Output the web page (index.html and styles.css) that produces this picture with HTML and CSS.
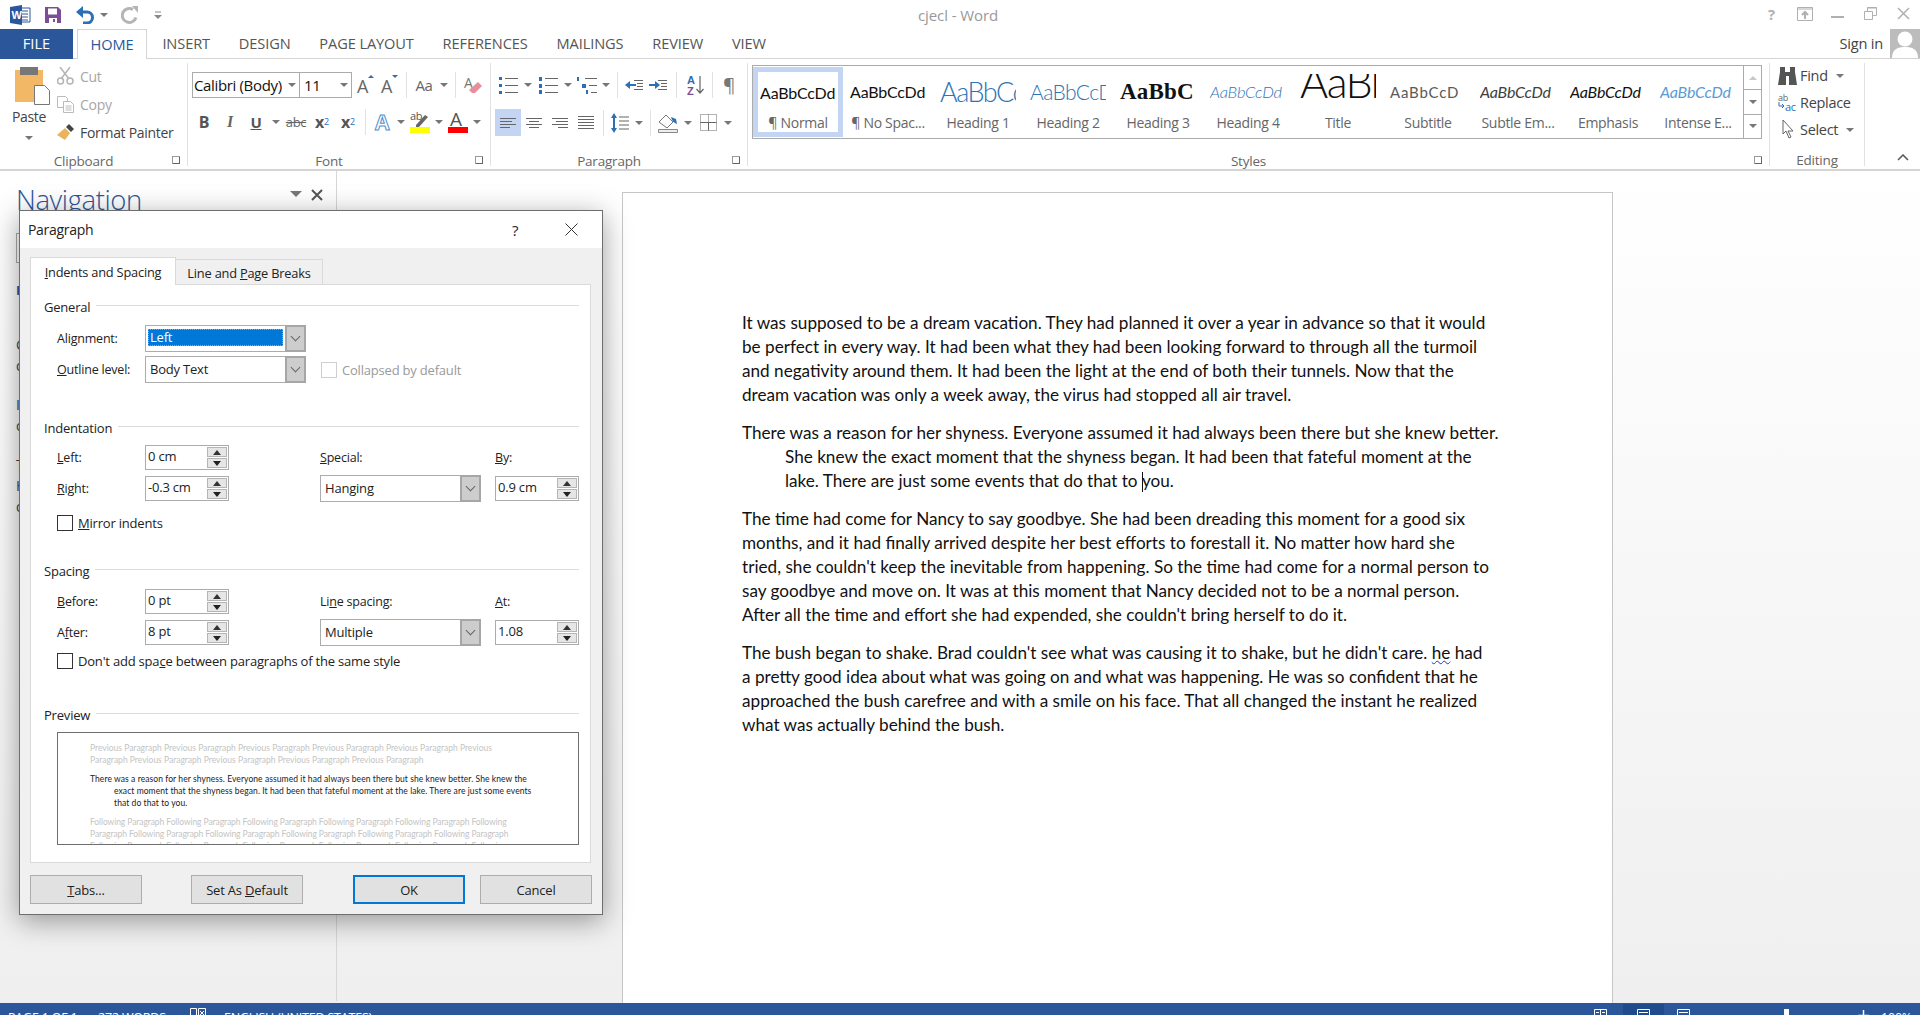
FILE: index.html
```html
<!DOCTYPE html>
<html lang="en">
<head>
    <meta charset="UTF-8">
    <title>cjecl - Word</title>
    <link rel="stylesheet" href="styles.css">
</head>
<body>
<div class="app">
    <!-- title bar -->
    <div class="titlebar">
        <div class="qat">
            <svg class="word-logo" width="21" height="20" viewBox="0 0 21 20"><path d="M7 3h13v14H7z" fill="#fff" stroke="#2b579a"/><path d="M10 6h8M10 9h8M10 12h8M10 15h8" stroke="#2b579a"/><path d="M0 2 12 0v20L0 18z" fill="#2b579a"/><text x="1.5" y="14" font-size="11" font-weight="700" fill="#fff" font-family="Liberation Sans">W</text></svg>
            <svg class="qat-save" width="16" height="16" viewBox="0 0 16 16"><path d="M0 0h13l3 3v13H0z" fill="#7d4e98"/><path d="M3 1.500h9v6H3z" fill="#fff"/><path d="M4 11h8v5H4z" fill="#fff"/><path d="M8 12h2v3H8z" fill="#7d4e98"/></svg>
            <svg class="qat-undo" width="19" height="18" viewBox="0 0 19 18"><path d="M2 6h9a5 5 0 0 1 0 11H7" fill="none" stroke="#2b6fb5" stroke-width="3"/><path d="M0 6l7-6v12z" fill="#2b6fb5"/></svg>
            <i class="caret qat-caret"></i>
            <svg class="qat-redo" width="18" height="18" viewBox="0 0 18 18"><path d="M12 3.500a7 7 0 1 0 3 8" fill="none" stroke="#b5b5b5" stroke-width="3"/><path d="M11 0h6v7z" fill="#b5b5b5"/></svg>
            <svg class="qat-more" width="8" height="8" viewBox="0 0 8 8"><path d="M1 1h6" stroke="#888"/><path d="M0 4h8L4 8z" fill="#888"/></svg>
        </div>
        <div class="doc-title">cjecl - Word</div>
        <div class="win-btns">
            <span class="win-btn win-help">?</span>
            <span class="win-btn"><svg width="16" height="14" viewBox="0 0 16 14"><path d="M.5.500h15v13H.5z" fill="none" stroke="#b0b0b0"/><path d="M1 2h14" stroke="#b0b0b0"/><path d="M8 12V5M5 8l3-3 3 3" fill="none" stroke="#b0b0b0" stroke-width="2"/></svg></span>
            <span class="win-btn"><svg width="13" height="14" viewBox="0 0 13 14"><path d="M0 10h13" stroke="#b0b0b0" stroke-width="2"/></svg></span>
            <span class="win-btn"><svg width="13" height="13" viewBox="0 0 13 13"><path d="M.5 4.500h8v8h-8zM3.500 4V.500h9v8H9" fill="none" stroke="#b0b0b0"/><path d="M3 1h10" stroke="#b0b0b0"/></svg></span>
            <span class="win-btn"><svg width="13" height="13" viewBox="0 0 13 13"><path d="M1 1l11 11M12 1L1 12" stroke="#b0b0b0" stroke-width="1.500"/></svg></span>
        </div>
    </div>

    <!-- ribbon tabs -->
    <div class="tabs">
        <span class="tab-file">FILE</span>
        <span class="tab tab-home">HOME</span>
        <span class="tab">INSERT</span>
        <span class="tab">DESIGN</span>
        <span class="tab">PAGE LAYOUT</span>
        <span class="tab">REFERENCES</span>
        <span class="tab">MAILINGS</span>
        <span class="tab">REVIEW</span>
        <span class="tab">VIEW</span>
        <span class="sign-in">Sign in</span>
        <span class="avatar"><svg width="30" height="29" viewBox="0 0 30 29"><circle cx="15" cy="10" r="7.500" fill="#fff"/><path d="M2 29c0-9 6-11 13-11s13 2 13 11z" fill="#fff"/></svg></span>
    </div>

    <!-- ribbon -->
    <div class="ribbon">
        <div class="group group-clipboard">
            <div class="group-body clip-body">
                <div class="paste">
                    <svg width="36" height="38" viewBox="0 0 36 38"><path d="M0 3h28v32H0z" fill="#f2b866"/><path d="M5 0h18v8H5z" fill="#777"/><path d="M19.500 18.500h10l5 5v14h-15z" fill="#fff" stroke="#777"/></svg>
                    <span class="paste-label">Paste</span>
                    <i class="caret"></i>
                </div>
                <div class="clip-tools">
                    <div class="clip-row muted">
                        <svg width="17" height="18" viewBox="0 0 17 18"><circle cx="3.500" cy="14" r="3" fill="none" stroke="#b5b5b5" stroke-width="1.500"/><circle cx="13" cy="14" r="3" fill="none" stroke="#b5b5b5" stroke-width="1.500"/><path d="M3 0l9 12M13 0L4 12" stroke="#b5b5b5" stroke-width="1.500"/></svg>
                        <span>Cut</span>
                    </div>
                    <div class="clip-row muted">
                        <svg width="17" height="17" viewBox="0 0 17 17"><path d="M.5.500h8l2 2v9H.5z" fill="#fff" stroke="#bbb"/><path d="M6.500 5.500h7l3 3v8h-10z" fill="#fff" stroke="#bbb"/><path d="M8.500 10h6M8.500 12h6M8.500 14h6" stroke="#bbb"/></svg>
                        <span>Copy</span>
                    </div>
                    <div class="clip-row">
                        <svg width="17" height="16" viewBox="0 0 17 16"><path d="M0 11l8-7 5 5-5 7z" fill="#eab35d"/><path d="M9 3l3-3 5 5-3 3z" fill="#444"/></svg>
                        <span>Format Painter</span>
                    </div>
                </div>
            </div>
            <div class="group-label">Clipboard<i class="launcher"></i></div>
        </div>

        <div class="group group-font">
            <div class="group-body">
                <div class="tool-row font-row1">
                    <div class="font-box">
                        <span class="font-name">Calibri (Body)</span><i class="caret"></i>
                        <span class="font-size">11</span><i class="caret"></i>
                    </div>
                    <span class="t t-n"><svg width="20" height="20" viewBox="0 0 20 20"><text x="1" y="18" font-size="18" fill="#666" font-family="Open Sans">A</text><path d="M12 3h6l-3-3z" fill="#2b6fb5"/></svg></span>
                    <span class="t t-n"><svg width="20" height="20" viewBox="0 0 20 20"><text x="1" y="18" font-size="18" fill="#666" font-family="Open Sans">A</text><path d="M12 0h6l-3 3z" fill="#2b6fb5"/></svg></span>
                    <i class="sep"></i>
                    <span class="t aa">Aa</span><i class="caret"></i>
                    <i class="sep"></i>
                    <span class="t"><svg width="20" height="20" viewBox="0 0 20 20"><text x="1" y="13" font-size="14" fill="#777" font-family="Open Sans">A</text><path d="M6 15l9-8 4 4-7 7H9z" fill="#e98d96"/></svg></span>
                </div>
                <div class="tool-row font-row2">
                    <span class="t fmt-b">B</span>
                    <span class="t fmt-i">I</span>
                    <span class="t fmt-u">U</span><i class="caret"></i>
                    <span class="t fmt-s">abc</span>
                    <span class="t fmt-x">x<sub>2</sub></span>
                    <span class="t fmt-x">x<sup>2</sup></span>
                    <i class="sep"></i>
                    <span class="t t-n fmt-a">A</span><i class="caret"></i>
                    <span class="t t-n"><svg width="20" height="22" viewBox="0 0 20 22"><text x="0" y="9" font-size="11" fill="#555" font-family="Open Sans">ab</text><path d="M6 14l9-10 3 2-9 10H6z" fill="#666"/><path d="M0 16h20v6H0z" fill="#ff0"/></svg></span><i class="caret"></i>
                    <span class="t t-n"><svg width="20" height="22" viewBox="0 0 20 22"><text x="2" y="15" font-size="19" fill="#555" font-family="Open Sans">A</text><path d="M0 16h20v6H0z" fill="#f00"/></svg></span><i class="caret"></i>
                </div>
            </div>
            <div class="group-label">Font<i class="launcher"></i></div>
        </div>

        <div class="group group-para">
            <div class="group-body">
                <div class="tool-row para-row1">
                    <span class="t"><svg width="20" height="17" viewBox="0 0 20 17"><path d="M7 1.500h13M7 8.500h13M7 15.500h13" stroke="#666" stroke-width="1.200"/><path d="M1 0h3v3H1zM1 7h3v3H1zM1 14h3v3H1z" fill="#2b6fb5"/></svg></span><i class="caret"></i>
                    <span class="t"><svg width="20" height="17" viewBox="0 0 20 17"><path d="M7 1.500h13M7 8.500h13M7 15.500h13" stroke="#666" stroke-width="1.200"/><path d="M1 0h3v4H1zM1 7h3v4H1zM1 13h3v4H1z" fill="#2b6fb5"/></svg></span><i class="caret"></i>
                    <span class="t t-n"><svg width="20" height="17" viewBox="0 0 20 17"><path d="M8 1.500h12M12 8.500h8M14 15.500h6" stroke="#666" stroke-width="1.200"/><path d="M0 0h2v4H0zM5 7h4v4H5zM9 13h2v4H9z" fill="#2b6fb5"/></svg></span><i class="caret"></i>
                    <i class="sep"></i>
                    <span class="t t-n"><svg width="18" height="10" viewBox="0 0 18 10"><path d="M9 .500h9M12 3.500h6M12 6.500h6M9 9.500h9" stroke="#666"/><path d="M0 5l5-4v3h6v2H5v3z" fill="#2b6fb5"/></svg></span>
                    <span class="t t-n"><svg width="18" height="10" viewBox="0 0 18 10"><path d="M9 .500h9M12 3.500h6M12 6.500h6M9 9.500h9" stroke="#666"/><path d="M11 5L6 1v3H0v2h6v3z" fill="#2b6fb5"/></svg></span>
                    <i class="sep sep-wide"></i>
                    <span class="t"><svg width="17" height="20" viewBox="0 0 17 20"><text x="0" y="9" font-size="11" font-weight="700" fill="#2b6fb5" font-family="Liberation Sans">A</text><text x="0" y="20" font-size="11" font-weight="700" fill="#7d4e98" font-family="Liberation Sans">Z</text><path d="M13 1v17M9.500 14l3.500 4 3.500-4" fill="none" stroke="#666" stroke-width="1.200"/></svg></span>
                    <i class="sep"></i>
                    <span class="t t-n pilcrow">¶</span>
                </div>
                <div class="tool-row para-row2">
                    <span class="t t-on"><svg width="16" height="10" viewBox="0 0 16 10"><path d="M0 .500h16M0 3.500h12M0 6.500h16M0 9.500h10" stroke="#666"/></svg></span>
                    <span class="t"><svg width="16" height="10" viewBox="0 0 16 10"><path d="M0 .500h16M3 3.500h10M0 6.500h16M3 9.500h10" stroke="#666"/></svg></span>
                    <span class="t"><svg width="16" height="10" viewBox="0 0 16 10"><path d="M0 .500h16M4 3.500h12M0 6.500h16M6 9.500h10" stroke="#666"/></svg></span>
                    <span class="t"><svg width="16" height="13" viewBox="0 0 16 13"><path d="M0 .500h16M0 3.500h16M0 6.500h16M0 9.500h16M0 12.500h16" stroke="#666"/></svg></span>
                    <i class="sep"></i>
                    <span class="t t-n"><svg width="18" height="20" viewBox="0 0 18 20"><path d="M8 4h10M8 8h10M8 12h10M8 16h10" stroke="#666" stroke-width="1.200"/><path d="M3 3v14" stroke="#2b6fb5" stroke-width="2"/><path d="M0 5l3-5 3 5zM0 15l3 5 3-5z" fill="#2b6fb5"/></svg></span><i class="caret"></i>
                    <i class="sep"></i>
                    <span class="t"><svg width="20" height="20" viewBox="0 0 20 20"><path d="M1 9l7-7 7 7-6 6z" fill="#fff" stroke="#777"/><path d="M13 4l5 2 1 5c-3-1-5-3-6-7z" fill="#2b6fb5"/><path d="M.5 16.500h19v3H.5z" fill="#eee" stroke="#888"/></svg></span><i class="caret"></i>
                    <span class="t"><svg width="17" height="17" viewBox="0 0 17 17"><path d="M.5.500h16v16H.5zM.5 8.500h16M8.500.500v16" fill="none" stroke="#666" stroke-dasharray="1 1"/><path d="M.5 8.500h16M8.500 8.500v8" stroke="#666" fill="none"/></svg></span><i class="caret"></i>
                </div>
            </div>
            <div class="group-label">Paragraph<i class="launcher"></i></div>
        </div>

        <div class="group group-styles">
            <div class="group-body">
                <div class="gallery">
                    <div class="style-item style-on"><span class="sample s-normal">AaBbCcDd</span><span class="style-name">¶ Normal</span></div>
                    <div class="style-item"><span class="sample s-normal">AaBbCcDd</span><span class="style-name">¶ No Spac...</span></div>
                    <div class="style-item"><span class="sample s-h1">AaBbCc</span><span class="style-name">Heading 1</span></div>
                    <div class="style-item"><span class="sample s-h2">AaBbCcD</span><span class="style-name">Heading 2</span></div>
                    <div class="style-item"><span class="sample s-h3">AaBbC</span><span class="style-name">Heading 3</span></div>
                    <div class="style-item"><span class="sample s-h4">AaBbCcDd</span><span class="style-name">Heading 4</span></div>
                    <div class="style-item"><span class="sample s-title">AaBbC</span><span class="style-name">Title</span></div>
                    <div class="style-item"><span class="sample s-subtitle">AaBbCcD</span><span class="style-name">Subtitle</span></div>
                    <div class="style-item"><span class="sample s-subtle">AaBbCcDd</span><span class="style-name">Subtle Em...</span></div>
                    <div class="style-item"><span class="sample s-em">AaBbCcDd</span><span class="style-name">Emphasis</span></div>
                    <div class="style-item"><span class="sample s-intense">AaBbCcDd</span><span class="style-name">Intense E...</span></div>
                    <div class="gallery-scroll">
                        <span><i class="tri-up"></i></span>
                        <span><i class="caret"></i></span>
                        <span class="gallery-more"><i class="caret"></i></span>
                    </div>
                </div>
            </div>
            <div class="group-label">Styles<i class="launcher"></i></div>
        </div>

        <div class="group group-edit">
            <div class="group-body edit-body">
                <div class="edit-row">
                    <svg width="19" height="19" viewBox="0 0 19 19"><path d="M2 1h5v5h5V1h5v5l2 13h-8V10H8v9H0L2 6z" fill="#555"/></svg>
                    <span>Find</span><i class="caret"></i>
                </div>
                <div class="edit-row">
                    <svg width="19" height="19" viewBox="0 0 19 19"><text x="0" y="8" font-size="9" fill="#666" font-family="Open Sans">ab</text><text x="7" y="18" font-size="11" fill="#2b6fb5" font-family="Open Sans">ac</text><path d="M1 9v4h5M4 11l2 2-2 2" fill="none" stroke="#2b6fb5"/></svg>
                    <span>Replace</span>
                </div>
                <div class="edit-row">
                    <svg width="19" height="19" viewBox="0 0 19 19"><path d="M5 0v14l3-3 3 7 2-1-3-6h5z" fill="#fff" stroke="#666"/></svg>
                    <span>Select</span><i class="caret"></i>
                </div>
            </div>
            <div class="group-label label-plain">Editing</div>
        </div>
        <div class="collapse"><svg width="12" height="7" viewBox="0 0 12 7"><path d="M1 6l5-5 5 5" fill="none" stroke="#555" stroke-width="1.500"/></svg></div>
    </div>

    <!-- navigation pane and document -->
    <div class="workspace">
        <div class="nav">
            <div class="nav-head">
                <span class="nav-title">Navigation</span>
                <i class="nav-drop"></i>
                <svg width="12" height="12" viewBox="0 0 12 12"><path d="M1 1l10 10M11 1L1 11" stroke="#555" stroke-width="2"/></svg>
            </div>
            <div class="nav-search"></div>
            <div class="nav-tab">HEADINGS</div>
            <p class="nav-text">Create an interactive outline of your<br>document.</p>
            <p class="nav-text">It's a great way to keep track of where you are<br>or quickly move your content around.</p>
            <p class="nav-text">To get started, go to the Home tab and apply<br>Heading styles to the headings in your<br>document.</p>
        </div>
        <div class="doc">
            <div class="page">
                <p>It was supposed to be a dream vacation. They had planned it over a year in advance so that it would<br>be perfect in every way. It had been what they had been looking forward to through all the turmoil<br>and negativity around them. It had been the light at the end of both their tunnels. Now that the<br>dream vacation was only a week away, the virus had stopped all air travel.</p>
                <p class="hanging">There was a reason for her shyness. Everyone assumed it had always been there but she knew better.<br>She knew the exact moment that the shyness began. It had been that fateful moment at the<br>lake. There are just some events that do that to <span class="cursor"></span>you.</p>
                <p>The time had come for Nancy to say goodbye. She had been dreading this moment for a good six<br>months, and it had finally arrived despite her best efforts to forestall it. No matter how hard she<br>tried, she couldn't keep the inevitable from happening. So the time had come for a normal person to<br>say goodbye and move on. It was at this moment that Nancy decided not to be a normal person.<br>After all the time and effort she had expended, she couldn't bring herself to do it.</p>
                <p>The bush began to shake. Brad couldn't see what was causing it to shake, but he didn't care. <span class="squiggle">he</span> had<br>a pretty good idea about what was going on and what was happening. He was so confident that he<br>approached the bush carefree and with a smile on his face. That all changed the instant he realized<br>what was actually behind the bush.</p>
            </div>
        </div>
    </div>

    <!-- status bar, cut by the window edge -->
    <div class="status">
        <span class="st-page">PAGE 1 OF 1</span>
        <span class="st-words">272 WORDS</span>
        <svg class="st-proof" width="16" height="16" viewBox="0 0 16 16"><path d="M.5.500h6v14h-6zM8.500.500h7v14h-7z" fill="none" stroke="#fff"/><path d="M10 3l4 4M14 3l-4 4" stroke="#fff"/></svg>
        <span class="st-lang">ENGLISH (UNITED STATES)</span>
        <div class="st-right">
            <svg class="st-read" width="13" height="12" viewBox="0 0 13 12"><path d="M.5.500h12v11H.5zM6.500.500v11M2 3.500h3M8 3.500h3M2 6.500h3M8 6.500h3" fill="none" stroke="#fff"/></svg>
            <span class="st-active"><svg width="13" height="12" viewBox="0 0 13 12"><path d="M.5.500h12v11H.5zM2 3.500h9M2 6.500h9M2 9.500h9" fill="none" stroke="#fff"/></svg></span>
            <svg class="st-web" width="13" height="12" viewBox="0 0 13 12"><path d="M.5.500h12v11H.5zM2 3.500h9M2 6.500h6" fill="none" stroke="#fff"/></svg>
            <i class="st-thumb"></i>
            <svg class="st-plus" width="11" height="11" viewBox="0 0 11 11"><path d="M5.500 0v11M0 5.500h11" stroke="#fff" stroke-width="1.500"/></svg>
            <span class="st-zoom">100%</span>
        </div>
    </div>

    <!-- paragraph dialog over the window -->
    <div class="dialog">
        <div class="dlg-title">
            <span class="dlg-name">Paragraph</span>
            <span class="dlg-help">?</span>
            <svg width="13" height="13" viewBox="0 0 13 13"><path d="M.5.500l12 12M12.500.500l-12 12" stroke="#333"/></svg>
        </div>
        <div class="dlg-body">
            <div class="dlg-tabs">
                <span class="dlg-tab dlg-tab-on"><u>I</u>ndents and Spacing</span>
                <span class="dlg-tab">Line and <u>P</u>age Breaks</span>
            </div>
            <div class="panel">
                <div class="legend legend-first">General</div>
                <div class="row row-general row-align">
                    <label>Ali<u>g</u>nment:</label>
                    <div class="combo"><span class="combo-text"><span class="combo-sel">Left</span></span><span class="combo-btn"><i class="chev"></i></span></div>
                </div>
                <div class="row row-general row-outline">
                    <label><u>O</u>utline level:</label>
                    <div class="combo"><span class="combo-text">Body Text</span><span class="combo-btn"><i class="chev"></i></span></div>
                    <i></i>
                    <div class="check check-off"><i class="box"></i><span>Collapsed by default</span></div>
                </div>

                <div class="legend legend-indent">Indentation</div>
                <div class="row row-form row-first">
                    <label><u>L</u>eft:</label>
                    <div class="spin"><span class="spin-text">0 cm</span><span class="spin-btns"><b><i class="tri-up"></i></b><b><i class="caret"></i></b></span></div>
                    <i></i>
                    <label class="col-special"><u>S</u>pecial:</label>
                    <i></i>
                    <label><u>B</u>y:</label>
                </div>
                <div class="row row-form row-second">
                    <label><u>R</u>ight:</label>
                    <div class="spin"><span class="spin-text">-0.3 cm</span><span class="spin-btns"><b><i class="tri-up"></i></b><b><i class="caret"></i></b></span></div>
                    <i></i>
                    <div class="combo"><span class="combo-text">Hanging</span><span class="combo-btn"><i class="chev"></i></span></div>
                    <i></i>
                    <div class="spin"><span class="spin-text">0.9 cm</span><span class="spin-btns"><b><i class="tri-up"></i></b><b><i class="caret"></i></b></span></div>
                </div>
                <div class="check check-mirror"><i class="box"></i><span><u>M</u>irror indents</span></div>

                <div class="legend legend-spacing">Spacing</div>
                <div class="row row-form row-first">
                    <label><u>B</u>efore:</label>
                    <div class="spin"><span class="spin-text">0 pt</span><span class="spin-btns"><b><i class="tri-up"></i></b><b><i class="caret"></i></b></span></div>
                    <i></i>
                    <label class="col-special">Li<u>n</u>e spacing:</label>
                    <i></i>
                    <label><u>A</u>t:</label>
                </div>
                <div class="row row-form row-second">
                    <label>A<u>f</u>ter:</label>
                    <div class="spin"><span class="spin-text">8 pt</span><span class="spin-btns"><b><i class="tri-up"></i></b><b><i class="caret"></i></b></span></div>
                    <i></i>
                    <div class="combo"><span class="combo-text">Multiple</span><span class="combo-btn"><i class="chev"></i></span></div>
                    <i></i>
                    <div class="spin"><span class="spin-text">1.08</span><span class="spin-btns"><b><i class="tri-up"></i></b><b><i class="caret"></i></b></span></div>
                </div>
                <div class="check check-space"><i class="box"></i><span>Don't add spa<u>c</u>e between paragraphs of the same style</span></div>

                <div class="legend legend-preview">Preview</div>
                <div class="preview">
                    <p class="pv-grey">Previous Paragraph Previous Paragraph Previous Paragraph Previous Paragraph Previous Paragraph Previous<br>Paragraph Previous Paragraph Previous Paragraph Previous Paragraph Previous Paragraph</p>
                    <p class="pv-main">There was a reason for her shyness. Everyone assumed it had always been there but she knew better. She knew the<br><span class="pv-in">exact moment that the shyness began. It had been that fateful moment at the lake. There are just some events</span><br><span class="pv-in">that do that to you.</span></p>
                    <p class="pv-grey pv-after">Following Paragraph Following Paragraph Following Paragraph Following Paragraph Following Paragraph Following<br>Paragraph Following Paragraph Following Paragraph Following Paragraph Following Paragraph Following Paragraph<br>Following Paragraph Following Paragraph Following Paragraph Following Paragraph Following Paragraph Following</p>
                </div>
            </div>
            <div class="dlg-btns">
                <span class="btn"><u>T</u>abs...</span>
                <span class="btn btn-default">Set As <u>D</u>efault</span>
                <span class="btn btn-ok">OK</span>
                <span class="btn btn-cancel">Cancel</span>
            </div>
        </div>
    </div>
</div>
</body>
</html>
```

FILE: styles.css
```css
body,p{ margin: 0;}
body{
    font-family: "Open Sans", "Liberation Sans", sans-serif;
    color: #444;
    overflow: hidden;
}
i{ display: block; font-style: normal;}
.app{
    position: relative;
    display: flex;
    flex-direction: column;
    height: 1015px;
    overflow: hidden;
}

/* title bar */
.titlebar{
    display: grid;
    grid-template-columns: 1fr auto 1fr;
    height: 29px;
    flex-shrink: 0;
}
.qat{
    display: flex;
    align-items: center;
    padding: 0 0 0 10px;
}
.qat-save{ margin-left: 14px;}
.qat-undo{ margin-left: 15px;}
.qat-caret{ margin-left: 5px;}
.qat-redo{ margin-left: 13px;}
.qat-more{ margin-left: 15px;}
.doc-title{
    margin-right: 4px;
    font-size: 15px;
    line-height: 30px;
    color: #999;
    letter-spacing: -.1px;
}
.win-btns{
    display: flex;
    justify-content: flex-end;
}
.win-btn{
    display: flex;
    align-items: center;
    justify-content: center;
    width: 33px;
    height: 27px;
}
.win-help{
    font-size: 15px;
    font-weight: 700;
    color: #b0b0b0;
}

/* tabs */
.tabs{
    display: flex;
    align-items: stretch;
    height: 30px;
    flex-shrink: 0;
    border-bottom: 1px solid #d4d4d4;
    box-sizing: border-box;
    font-size: 14.600px;
    line-height: 29px;
}
.tab-file{
    width: 73px;
    margin-right: 4px;
    text-align: center;
    color: #fff;
    background-color: #2b579a;
    height: 30px;
}
.tab{
    padding: 0 14.400px;
    color: #555;
    letter-spacing: -.1px;
}
.tab-home{
    width: 70px;
    box-sizing: border-box;
    height: 30px;
    margin-right: 1px;
    padding: 0;
    text-align: center;
    color: #2b579a;
    background-color: #fff;
    border: 1px solid #d4d4d4;
    border-bottom: 0;
}
.sign-in{
    margin-left: auto;
    margin-right: 7px;
    letter-spacing: -.2px;
}
.avatar{
    width: 30px;
    height: 29px;
    background-color: #bcbcbc;
}
.avatar svg{ display: block;}

/* ribbon */
.ribbon{
    display: flex;
    height: 112px;
    flex-shrink: 0;
    padding-top: 4px;
    box-sizing: border-box;
    border-bottom: 2px solid #d4d4d4;
    font-size: 14px;
    letter-spacing: -.3px;
}
.group{
    display: flex;
    flex-direction: column;
    height: 103px;
    border-right: 1px solid #e1e1e1;
}
.group-clipboard{ width: 187px;}
.group-font{ width: 302px;}
.group-para{ width: 256px;}
.group-styles{ width: 1021px;}
.group-edit{ width: 94px;}
.group-body{ height: 87px; flex-shrink: 0;}
.group-label{
    position: relative;
    padding-right: 20px;
    margin-top: 3px;
    font-size: 13.500px;
    line-height: 16px;
    text-align: center;
    color: #666;
    letter-spacing: -.2px;
}
.group-label.label-plain{ padding-right: 0;}
.launcher{
    position: absolute;
    right: 7px;
    top: 3px;
    width: 7px;
    height: 7px;
    border: 1px solid #999;
    border-width: 1px 0 0 1px;
    box-shadow: inset -2px -2px 0 -1px #666;
}
.caret{
    flex-shrink: 0;
    width: 0;
    height: 0;
    border: 4px solid transparent;
    border-top-color: #777;
    border-bottom: 0;
}
.tri-up{
    width: 0;
    height: 0;
    border: 4px solid transparent;
    border-bottom-color: #333;
    border-top: 0;
}

/* clipboard */
.clip-body{ display: flex;}
.paste{
    display: flex;
    flex-direction: column;
    align-items: center;
    width: 46px;
    margin: 4px 0 0 6px;
    height: 80px;
}
.paste svg{ margin-left: 8px;}
.paste-label{ margin-top: 2px; line-height: 20px;}
.paste .caret{ margin-top: 9px;}
.clip-tools{ margin: -1px 0 0 5px;}
.clip-row{
    display: flex;
    align-items: center;
    gap: 6px;
    height: 28px;
    color: #444;
    white-space: nowrap;
}
.clip-row.muted{ color: #a6a6a6;}

/* tool rows */
.tool-row{
    display: flex;
    align-items: center;
}
.tool-row .caret{ margin: 0 3px;}
.t{
    display: flex;
    align-items: center;
    justify-content: center;
    flex-shrink: 0;
    width: 26px;
    height: 27px;
}
.t-n{ width: 24px;}
.t-on{ background-color: #c3d5f2;}
.sep{
    flex-shrink: 0;
    width: 1px;
    height: 26px;
    margin: 0 4px;
    background-color: #e1e1e1;
}
.sep-wide{ margin: 0 5px 0 6px;}
.font-row1{ height: 26px; margin-top: 9px; padding-left: 4px;}
.font-row2{ height: 27px; margin-top: 10px; padding-left: 3px;}
.font-box{
    display: flex;
    align-items: center;
    width: 160px;
    height: 26px;
    box-sizing: border-box;
    border: 1px solid #ababab;
    color: #111;
    font-size: 15px;
    letter-spacing: -.35px;
    white-space: nowrap;
    margin-right: 2px;
}
.font-name{
    width: 92px;
    padding-left: 1px;
    box-sizing: border-box;
    overflow: hidden;
}
.font-size{
    width: 38px;
    box-sizing: border-box;
    padding-left: 4px;
    border-left: 1px solid #ababab;
    line-height: 24px;
}
.aa{ color: #666; font-size: 15px;}
.fmt-b{ font-weight: 700; font-size: 16px; color: #555;}
.fmt-i{ font-style: italic; font-weight: 700; font-size: 16px; color: #666; font-family: "Liberation Serif", serif;}
.fmt-u{ text-decoration: underline; font-weight: 700; font-size: 15px; color: #555;}
.fmt-s{ text-decoration: line-through; font-size: 13px; color: #666;}
.fmt-x{ font-weight: 700; font-size: 16px; color: #555;}
.fmt-x sub, .fmt-x sup{ font-size: 9px; font-weight: 400; color: #2b6fb5; line-height: 0;}
.fmt-a{
    font-size: 21px;
    font-weight: 700;
    color: #fff;
    -webkit-text-stroke: 1px #4f8fd0;
}
.para-row1{ height: 26px; margin-top: 9px; padding-left: 4px;}
.para-row2{ height: 27px; margin-top: 11px; padding-left: 4px;}
.pilcrow{ font-size: 19px; color: #777;}

/* styles gallery */
.gallery{
    display: flex;
    height: 74px;
    margin: 2px 0 0 4px;
    width: 1010px;
    box-sizing: border-box;
    border: 1px solid #ababab;
    padding-top: 1px;
}
.style-item{
    display: flex;
    flex-direction: column;
    align-items: center;
    width: 90px;
    height: 70px;
    padding-top: 2px;
    box-sizing: border-box;
}
.style-on{
    padding-top: 0;
    border: 5px solid #c3d5f2;
}
.sample{
    display: block;
    width: 76px;
    height: 46px;
    flex-shrink: 0;
    line-height: 46px;
    overflow: hidden;
    white-space: nowrap;
    font-family: Lato, "Liberation Sans", sans-serif;
    font-size: 16px;
    letter-spacing: -.2px;
    color: #111;
}
.style-on .sample{ height: 43px; line-height: 41px;}
.style-name{
    font-size: 14px;
    line-height: 16px;
    color: #666;
    white-space: nowrap;
}
.s-h1{ font-size: 27px; font-weight: 300; color: #2e74b5; letter-spacing: -1.500px;}
.s-h2{ font-size: 21px; font-weight: 300; color: #2e74b5; letter-spacing: -.6px;}
.s-h3{ font-family: "Liberation Serif", serif; font-size: 23px; font-weight: 700; color: #111; letter-spacing: .2px;}
.s-h4{ font-size: 16.500px; font-style: italic; font-weight: 300; color: #2e74b5;}
.s-title{
    height: 41px;
    margin-top: 5px;
    font-size: 43px;
    line-height: 16px;
    font-weight: 300;
    color: #111;
    letter-spacing: -1.500px;
}
.s-subtitle{ color: #5a5a5a; letter-spacing: .8px; font-size: 15px;}
.s-subtle{ font-style: italic; color: #404040;}
.s-em{ font-style: italic; color: #111;}
.s-intense{ font-style: italic; color: #5b9bd5;}
.gallery-scroll{
    display: flex;
    flex-direction: column;
    width: 17px;
    margin: -1px 0 0 auto;
    border-left: 1px solid #ababab;
}
.gallery-scroll span{
    display: flex;
    align-items: center;
    justify-content: center;
    flex: 1;
    border-bottom: 1px solid #ababab;
}
.gallery-scroll span:last-child{ border-bottom: 0;}
.gallery-scroll .tri-up{ border-bottom-color: #c8c8c8;}
.edit-body{ margin-top: -1px;}
.edit-row{
    display: flex;
    align-items: center;
    gap: 3px;
    height: 27px;
    padding-left: 8px;
    font-size: 14.500px;
}
.edit-row .caret{ margin-left: 5px;}
.collapse{
    align-self: flex-end;
    margin: 0 0 4px 32px;
}

/* workspace */
.workspace{
    display: flex;
    flex: 1;
    min-height: 0;
    background: linear-gradient(#fff, #efefef);
}
.nav{
    width: 337px;
    box-sizing: border-box;
    height: 830px;
    padding: 0 0 0 16px;
    border-right: 1px solid #d6d6d6;
    color: #444;
    white-space: nowrap;
}
.nav-head{
    display: flex;
    height: 62px;
    align-items: flex-start;
}
.nav-title{
    width: 274px;
    font-size: 27.500px;
    font-weight: 300;
    line-height: 58px;
    letter-spacing: -.4px;
    color: #2b579a;
}
.nav-drop{
    width: 0;
    height: 0;
    margin-top: 20px;
    border: 6px solid transparent;
    border-top-color: #777;
    border-bottom: 0;
}
.nav-head svg{ margin: 18px 0 0 9px;}
.nav-search{
    width: 300px;
    height: 30px;
    box-sizing: border-box;
    border: 1px solid #ababab;
    background-color: #fff;
}
.nav-tab{
    margin-top: 19px;
    font-size: 13px;
    font-weight: 700;
    line-height: 16px;
    color: #2b579a;
}
.nav-text{
    font-size: 14px;
    line-height: 21px;
    margin-top: 18px;
}
.nav-tab + .nav-text{ margin-top: 36px;}
.doc{ flex: 1;}
.page{
    width: 991px;
    height: 900px;
    margin: 21px 0 0 285px;
    padding: 118px 0 0 119px;
    box-sizing: border-box;
    border: 1px solid #c6c6c6;
    background-color: #fff;
    font-family: Lato, "Liberation Sans", sans-serif;
    font-size: 17.150px;
    line-height: 24px;
    color: #111;
    white-space: nowrap;
}
.page p{ margin-bottom: 14px;}
.page .hanging{
    padding-left: 43px;
    text-indent: -43px;
}
.cursor{
    display: inline-block;
    width: 1px;
    height: 20px;
    margin-right: -1px;
    vertical-align: -5px;
    background-color: #111;
}
.squiggle{ text-decoration: underline wavy #2b2bd0 1px;}

/* status bar */
.status{
    display: flex;
    height: 12px;
    flex-shrink: 0;
    overflow: hidden;
    background-color: #2b579a;
    color: #fff;
    font-size: 12.500px;
    line-height: 18px;
    letter-spacing: -.2px;
    white-space: nowrap;
}
.st-page{ margin: 6px 0 0 8px; width: 90px;}
.st-words{ margin-top: 6px; width: 92px;}
.st-proof{ margin-top: 5px;}
.st-lang{ margin: 6px 0 0 18px;}
.st-right{
    position: relative;
    display: flex;
    align-items: flex-start;
    margin-left: auto;
    width: 326px;
}
.st-read{ margin-top: 6px;}
.st-active{
    width: 41px;
    height: 12px;
    margin: 1px 0 0 16px;
    background-color: #1f4a8c;
    text-align: center;
}
.st-active svg{ margin-top: 5px;}
.st-web{ margin: 6px 0 0 13px;}
.st-thumb{
    width: 5px;
    height: 8px;
    margin: 6px 0 0 94px;
    background-color: #fff;
}
.st-plus{ margin: 7px 0 0 69px;}
.st-zoom{ margin: 6px 0 0 12px;}

/* dialog */
.dialog{
    position: absolute;
    left: 19px;
    top: 210px;
    width: 584px;
    height: 705px;
    box-sizing: border-box;
    border: 1px solid #6e6e6e;
    background-color: #f0f0f0;
    box-shadow: 0 6px 26px rgba(0,0,0,.38);
    font-size: 12.500px;
    letter-spacing: -.2px;
    color: #222;
}
.dlg-title{
    display: flex;
    align-items: center;
    height: 37px;
    padding: 0 24px 0 8px;
    background-color: #fff;
}
.dlg-name{ flex: 1; font-size: 14px; letter-spacing: -.3px;}
.dlg-help{ width: 53px; font-size: 15px;}
.dlg-body{ padding: 9px 0 0 10px;}
.dlg-tabs{
    display: flex;
    align-items: flex-end;
    height: 27px;
}
.dlg-tab{
    width: 147px;
    height: 25px;
    box-sizing: border-box;
    border: 1px solid #d9d9d9;
    border-left: 0;
    border-bottom: 0;
    text-align: center;
    line-height: 27px;
    font-size: 12.800px;
    background-color: #f0f0f0;
}
.dlg-tab-on{
    position: relative;
    width: 146px;
    height: 28px;
    margin-bottom: -1px;
    border-left: 1px solid #d9d9d9;
    background-color: #fff;
    line-height: 29px;
}
.panel{
    width: 561px;
    height: 579px;
    box-sizing: border-box;
    padding-left: 13px;
    border: 1px solid #d9d9d9;
    background-color: #fff;
}
.legend{
    display: flex;
    align-items: center;
    gap: 6px;
    width: 535px;
    height: 18px;
    font-size: 13px;
}
.legend::after{
    content: "";
    flex: 1;
    height: 1px;
    margin-top: -3px;
    background-color: #dcdcdc;
}
.legend-first{ margin-top: 13px;}
.legend-indent{ margin-top: 36px;}
.legend-spacing{ margin-top: 30px;}
.legend-preview{ margin-top: 36px;}
.row{
    display: grid;
    align-items: center;
    margin-left: 13px;
}
.row-general{ grid-template-columns: 88px 161px 15px auto;}
.row-align{ margin-top: 8px; height: 28px;}
.row-outline{ margin-top: 4px; height: 27px;}
.row-form{ grid-template-columns: 88px 84px 91px 161px 14px 84px;}
.row-first{ margin-top: 8px; height: 25px;}
.legend-spacing + .row-first{ margin-top: 9px;}
.row-second{ margin-top: 5px; height: 26px;}
.combo{
    display: flex;
    height: 27px;
    box-sizing: border-box;
    border: 1px solid #acacac;
    background-color: #fff;
}
.combo-text{
    flex: 1;
    padding: 0 4px;
    line-height: 25px;
    font-size: 13px;
}
.combo-sel{
    display: block;
    height: 17px;
    margin: 3px -2px 0 -2px;
    padding-left: 2px;
    line-height: 16px;
    color: #fff;
    background-color: #0078d7;
    outline: 1px dotted #c9a15f;
    outline-offset: -1px;
}
.combo-btn{
    display: flex;
    align-items: center;
    justify-content: center;
    width: 21px;
    box-sizing: border-box;
    border: 2px solid #a6a6a6;
    margin: -1px -1px -1px 0;
    height: 27px;
    background-color: #cdcdcd;
}
.chev{
    width: 6px;
    height: 6px;
    margin-top: -4px;
    border: solid #666;
    border-width: 0 1px 1px 0;
    transform: rotate(45deg);
}
.spin{
    display: flex;
    height: 25px;
    box-sizing: border-box;
    border: 1px solid #acacac;
    background-color: #fff;
}
.spin-text{
    flex: 1;
    padding-left: 2px;
    line-height: 21px;
    font-size: 13px;
}
.spin-btns{
    display: flex;
    flex-direction: column;
    gap: 1px;
    width: 20px;
    margin: 1px 1px 1px 0;
}
.spin-btns b{
    display: flex;
    align-items: center;
    justify-content: center;
    flex: 1;
    border: 1px solid #b5b5b5;
    background-color: #e6e6e6;
}
.spin-btns .caret{ border-top-color: #222; border-width: 5px 4px 0;}
.spin-btns .tri-up{ border-width: 0 4px 5px;}
.check{
    display: flex;
    align-items: center;
    gap: 5px;
    font-size: 13px;
}
.box{
    width: 16px;
    height: 16px;
    box-sizing: border-box;
    border: 1px solid #333;
    background-color: #fff;
}
.check-off{ color: #9a9a9a;}
.check-off .box{ border-color: #cfcfcf;}
.check-mirror{ margin: 13px 0 0 13px;}
.check-space{ margin: 7px 0 0 13px;}
.preview{
    width: 522px;
    height: 113px;
    margin: 8px 0 0 13px;
    padding: 9px 0 0 32px;
    box-sizing: border-box;
    border: 1px solid #6e6e6e;
    overflow: hidden;
    font-family: Lato, "Liberation Sans", sans-serif;
    font-size: 8.500px;
    line-height: 12px;
    letter-spacing: 0;
    white-space: nowrap;
}
.preview p{ margin-bottom: 7px;}
.pv-grey{ color: #c4c4c4;}
.pv-after{ letter-spacing: -.08px;}
.pv-main{ color: #222; letter-spacing: .08px;}
.pv-in{ margin-left: 24px;}
.dlg-btns{
    display: flex;
    margin-top: 12px;
}
.btn{
    width: 112px;
    height: 29px;
    box-sizing: border-box;
    border: 1px solid #adadad;
    background-color: #e1e1e1;
    text-align: center;
    line-height: 29px;
    font-size: 13px;
}
.btn-default{ margin-left: 49px;}
.btn-ok{
    margin-left: 50px;
    border: 2px solid #0078d7;
    line-height: 27px;
}
.btn-cancel{ margin-left: 15px;}
```
